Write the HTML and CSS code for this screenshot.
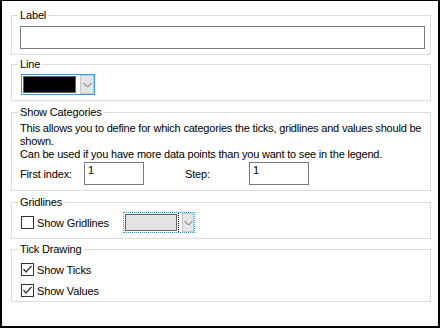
FILE: index.html
```html
<!DOCTYPE html>
<html lang="en">

<head>
    <meta charset="UTF-8">
    <title>Axis settings</title>
    <link rel="stylesheet" href="styles.css">
</head>

<body>
    <div class="panel">
        <fieldset class="group group-label">
            <legend>Label</legend>
            <div class="textbox wide"></div>
        </fieldset>

        <fieldset class="group group-line">
            <legend>Line</legend>
            <div class="combo">
                <span class="swatch black"></span>
                <span class="drop">
                    <svg width="9" height="6" viewBox="0 0 9 6"><polyline points="0.5,1 4.5,5 8.5,1" fill="none" stroke="#606060" stroke-width="1"/></svg>
                </span>
            </div>
        </fieldset>

        <fieldset class="group group-categories">
            <legend>Show Categories</legend>
            <p class="note">This allows you to define for which categories the ticks, gridlines and values should be<br>shown.<br>Can be used if you have more data points than you want to see in the legend.</p>
            <div class="range">
                <span class="caption">First index:</span>
                <div class="textbox small">1</div>
                <span class="caption">Step:</span>
                <div class="textbox small">1</div>
            </div>
        </fieldset>

        <fieldset class="group group-grid">
            <legend>Gridlines</legend>
            <div class="row">
                <label class="check"><span class="box"></span>Show Gridlines</label>
                <div class="combo focused">
                    <span class="focus-ring"><span class="swatch grey"></span></span>
                    <span class="drop">
                        <svg width="9" height="6" viewBox="0 0 9 6"><polyline points="0.5,1 4.5,5 8.5,1" fill="none" stroke="#606060" stroke-width="1"/></svg>
                    </span>
                </div>
            </div>
        </fieldset>

        <fieldset class="group group-ticks">
            <legend>Tick Drawing</legend>
            <label class="check"><span class="box"><svg width="11" height="11" viewBox="0 0 11 11"><polyline points="1.5,5 4,8 9.5,2" fill="none" stroke="#333" stroke-width="1.2"/></svg></span>Show Ticks</label>
            <label class="check"><span class="box"><svg width="11" height="11" viewBox="0 0 11 11"><polyline points="1.5,5 4,8 9.5,2" fill="none" stroke="#333" stroke-width="1.2"/></svg></span>Show Values</label>
        </fieldset>
    </div>
</body>

</html>
```
FILE: styles.css
```css
html,
body {
    margin: 0;
    padding: 0;
}

body {
    font: 11px "Liberation Sans", Arial, sans-serif;
    letter-spacing: -0.15px;
    color: #000;
    background: #fff;
}

.panel {
    width: 440px;
    height: 328px;
    box-sizing: border-box;
    border: 2px solid #000;
    border-top-width: 1px;
    padding: 7px 7px 0 9px;
}

/* group boxes */
.group {
    margin: 0;
    min-width: 0;
    border: 1px solid #dcdcdc;
    padding: 0 5px 5px 8px;
}

.group legend {
    padding: 0 2px;
    margin-left: -2px;
    line-height: 14px;
}

.group-line {
    margin-top: 2px;
}

.group-categories,
.group-grid {
    margin-top: 4px;
}

.group-ticks {
    margin-top: 3px;
    padding-bottom: 0;
}

/* text boxes */
.textbox {
    box-sizing: border-box;
    height: 23px;
    border: 1px solid #7a7a7a;
    padding: 0 3px;
    line-height: 14px;
    background: #fff;
}

.textbox.wide {
    margin-top: 4px;
}

.textbox.small {
    width: 60px;
}

/* colour combos */
.combo {
    display: flex;
    box-sizing: border-box;
    width: 74px;
    height: 21px;
    border: 1px solid #3399ff;
    padding: 1px 0 1px 1px;
    margin: 3px 0 0 1px;
}

.swatch {
    display: block;
    box-sizing: border-box;
    width: 53px;
    height: 17px;
    border: 1px solid #646464;
}

.swatch.black {
    background: #000;
}

.swatch.grey {
    width: 52px;
    background: #e3e3e3;
}

.drop {
    display: flex;
    align-items: center;
    justify-content: center;
    box-sizing: border-box;
    width: 14px;
    margin: -1px 0 -1px 4px;
    background: #e5e5e5;
    border: 1px solid #c8c8c8;
}

.combo.focused {
    width: 72px;
    margin: 0;
    border-style: dotted;
    padding: 0 0 0 1px;
}

.focus-ring {
    display: block;
    padding: 1px 1px 1px 0;
    border-right: 1px dotted #000;
}

.combo.focused .drop {
    width: 12px;
    height: 19px;
    margin: 0 0 0 3px;
}

/* show categories */
.note {
    margin: 3px 0 0;
    line-height: 13px;
    white-space: nowrap;
    letter-spacing: -0.2px;
}

.range {
    display: flex;
    align-items: center;
    margin-top: 1px;
}

.caption {
    width: 64px;
}

.range .textbox.small:nth-child(2) {
    margin-right: 41px;
}

/* checkboxes */
.row {
    display: flex;
    align-items: center;
    margin-top: 3px;
}

.row .check {
    width: 103px;
}

.check {
    display: flex;
    align-items: center;
    height: 21px;
}

.group-ticks legend + .check {
    margin-top: 3px;
}

.box {
    display: flex;
    align-items: center;
    justify-content: center;
    box-sizing: border-box;
    width: 13px;
    height: 13px;
    border: 1px solid #333;
    margin: 0 3px 0 1px;
    background: #fff;
}
```
